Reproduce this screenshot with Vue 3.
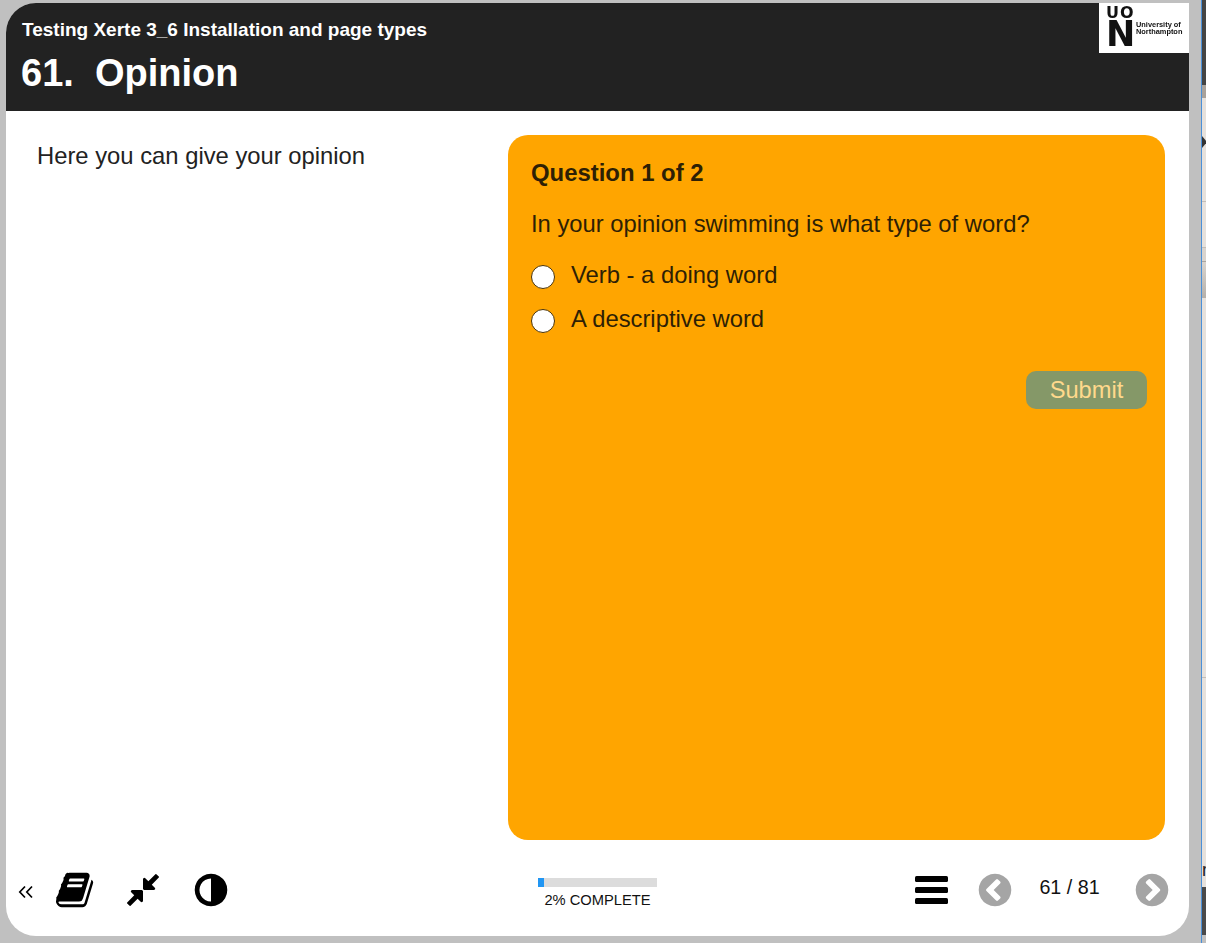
<script setup>
const options = ['Verb - a doing word', 'A descriptive word']
</script>

<template>
  <div class="screen">
    <div class="window">
      <header class="page-header">
        <div class="titles">
          <h2 class="course-title">Testing Xerte 3_6 Installation and page types</h2>
          <h1 class="page-title">61.&nbsp; Opinion</h1>
        </div>
        <div class="logo">
          <div class="logo-mark">
            <div class="logo-uo">UO</div>
            <div class="logo-n">N</div>
          </div>
          <div class="logo-name">University of<br />Northampton</div>
        </div>
      </header>

      <main class="content">
        <p class="intro">Here you can give your opinion</p>
        <section class="quiz">
          <h3 class="quiz-count">Question 1 of 2</h3>
          <p class="quiz-prompt">In your opinion swimming is what type of word?</p>
          <label v-for="opt in options" :key="opt" class="option">
            <span class="radio"></span>
            <span>{{ opt }}</span>
          </label>
          <div class="submit-row">
            <button class="submit">Submit</button>
          </div>
        </section>
      </main>

      <footer class="footer">
        <div class="tools">
          <svg class="chevrons" viewBox="0 0 16 16" width="16" height="16">
            <path d="M7 2.500 1.800 8 7 13.500M14 2.500 8.800 8l5.200 5.500" fill="none" stroke="#000" stroke-width="1.700" />
          </svg>
          <svg class="ico-book" viewBox="0 0 1792 1792" width="40" height="40">
            <path d="M1639 478q40 57 18 129l-275 906q-19 64-76.500 107.500t-122.500 43.500h-923q-77 0-148.500-53.500t-99.500-131.500q-24-67-2-127 0-4 3-27t4-37q1-8-3-21.500t-3-19.500q2-11 8-21t16.500-23.500 16.500-23.500q23-38 45-91.500t30-91.500q3-10 .5-30t-.5-28q3-11 17-28t17-23q21-36 42-92t25-90q1-9-2.500-32t.5-28q4-13 22-30.500t22-22.500q19-26 42.500-84.500t27.500-96.500q1-8-3-25.500t-2-26.500q2-8 9-18t18-23 17-21q8-12 16.500-30.500t15-35 16-36 19.500-32 26.500-23.500 36-11.500 47.500 5.500l-1 3q38-9 51-9h761q74 0 114 56t18 130l-274 906q-36 119-71.500 153.500t-128.500 34.500h-869q-27 0-38 15-11 16-1 43 24 70 144 70h923q29 0 56-15.500t35-41.500l300-987q7-22 5-57 38 15 59 43zm-1064 2q-4 13 2 22.500t20 9.500h608q13 0 25.500-9.500t16.500-22.500l21-64q4-13-2-22.500t-20-9.500h-608q-13 0-25.500 9.500t-16.500 22.500zm-83 256q-4 13 2 22.500t20 9.500h608q13 0 25.500-9.500t16.500-22.500l21-64q4-13-2-22.500t-20-9.500h-608q-13 0-25.500 9.500t-16.500 22.500z" />
          </svg>
          <svg class="ico-compress" viewBox="0 0 1792 1792" width="38" height="38">
            <path d="M896 960v448q0 26-19 45t-45 19-45-19l-144-144-332 332q-10 10-23 10t-23-10l-114-114q-10-10-10-23t10-23l332-332-144-144q-19-19-19-45t19-45 45-19h448q26 0 45 19t19 45zm755-672q0 13-10 23l-332 332 144 144q19 19 19 45t-19 45-45 19h-448q-26 0-45-19t-19-45v-448q0-26 19-45t45-19 45 19l144 144 332-332q10-10 23-10t23 10l114 114q10 10 10 23z" />
          </svg>
          <svg class="ico-contrast" viewBox="0 0 1792 1792" width="38" height="38">
            <path d="M896 1440v-1088q-148 0-273 73t-198 198-73 273 73 273 198 198 273 73zm768-544q0 209-103 385.500t-279.500 279.500-385.500 103-385.500-103-279.500-279.500-103-385.500 103-385.500 279.500-279.500 385.500-103 385.500 103 279.500 279.500 103 385.500z" />
          </svg>
        </div>

        <div class="progress">
          <div class="bar"><div class="bar-fill" :style="{ width: '5%' }"></div></div>
          <div class="bar-label">2% COMPLETE</div>
        </div>

        <div class="pager">
          <svg class="ico-menu" viewBox="0 0 32 28" width="33" height="28" preserveAspectRatio="none">
            <rect y="0" width="32" height="6" rx="1.500" />
            <rect y="11" width="32" height="6" rx="1.500" />
            <rect y="22" width="32" height="6" rx="1.500" />
          </svg>
          <svg class="ico-nav prev" viewBox="0 0 1792 1792" width="38" height="38">
            <path d="M1037 1395l102-102q19-19 19-45t-19-45l-307-307 307-307q19-19 19-45t-19-45l-102-102q-19-19-45-19t-45 19l-454 454q-19 19-19 45t19 45l454 454q19 19 45 19t45-19zm627-499q0 209-103 385.500t-279.500 279.500-385.500 103-385.500-103-279.500-279.500-103-385.500 103-385.500 279.500-279.500 385.500-103 385.500 103 279.500 279.500 103 385.500z" />
          </svg>
          <span class="page-count">61 / 81</span>
          <svg class="ico-nav" viewBox="0 0 1792 1792" width="38" height="38">
            <path d="M813 1395l454-454q19-19 19-45t-19-45l-454-454q-19-19-45-19t-45 19l-102 102q-19 19-19 45t19 45l307 307-307 307q-19 19-19 45t19 45l102 102q19 19 45 19t45-19zm851-499q0 209-103 385.500t-279.500 279.500-385.500 103-385.500-103-279.500-279.500-103-385.500 103-385.500 279.500-279.500 385.500-103 385.500 103 279.500 279.500 103 385.500z" />
          </svg>
        </div>
      </footer>
    </div>

    <aside class="behind">
      <div class="strip strip-dark"></div>
      <div class="strip strip-grey"></div>
      <div class="strip strip-tab"><span class="strip-arrow"></span></div>
      <div class="strip strip-row"></div>
      <div class="strip strip-thin"></div>
      <div class="strip strip-band"></div>
      <div class="strip strip-long"></div>
      <div class="strip strip-rest"><span class="strip-letter">r</span></div>
      <div class="strip strip-dark-end"></div>
    </aside>
  </div>
</template>

<style>
html,
body {
  margin: 0;
  background: #c0c0c0;
}
</style>

<style scoped>
.screen {
  display: flex;
  height: 943px;
  width: 1206px;
  overflow: hidden;
  padding: 3px 0 0 6px;
  box-sizing: border-box;
  background: #c0c0c0;
  font-family: "Liberation Sans", Arial, sans-serif;
}

.window {
  display: flex;
  flex-direction: column;
  flex: none;
  width: 1183px;
  height: 933px;
  background: #fff;
  border-radius: 30px 0 30px 30px;
  overflow: hidden;
}

.behind {
  display: flex;
  flex-direction: column;
  flex: none;
  width: 5px;
  height: 943px;
  margin: -3px 0 0 12px;
  border-left: 1px solid #4a90d9;
  box-sizing: border-box;
  overflow: hidden;
}

.strip {
  flex: none;
  box-sizing: border-box;
  background: #e6e1dc;
}

.strip-dark {
  height: 85px;
  background: #444;
}

.strip-grey {
  height: 13px;
  background: #a9a29b;
}

.strip-tab {
  height: 104px;
  display: flex;
  padding-top: 38px;
  border-bottom: 1px solid #c2bdb7;
}

.strip-arrow {
  width: 0;
  height: 0;
  border-left: 5px solid #333;
  border-top: 6px solid transparent;
  border-bottom: 6px solid transparent;
}

.strip-row {
  height: 46px;
  border-bottom: 1px solid #c2bdb7;
}

.strip-thin {
  height: 14px;
  background: #d9d4ce;
  border-bottom: 1px solid #aaa59f;
}

.strip-band {
  height: 36px;
  background: linear-gradient(#d9d4ce, #b5b0aa);
}

.strip-long {
  height: 380px;
  border-bottom: 1px solid #c2bdb7;
}

.strip-rest {
  height: 209px;
  overflow: hidden;
  display: flex;
  align-items: flex-end;
  padding-bottom: 8px;
}

.strip-letter {
  font-size: 18px;
  line-height: 18px;
  color: #222;
}

.strip-dark-end {
  height: 48px;
  background: #4a4a4a;
}

.page-header {
  display: flex;
  justify-content: space-between;
  align-items: flex-start;
  height: 108px;
  flex: none;
  background: #222;
  color: #fff;
}

.titles {
  padding: 15px 0 0 16px;
}

.course-title {
  margin: 0;
  font-size: 19px;
  line-height: 23px;
  font-weight: 700;
}

.page-title {
  margin: 10px 0 0 -1px;
  font-size: 38px;
  line-height: 44px;
  font-weight: 700;
}

.logo {
  display: flex;
  width: 90px;
  height: 50px;
  box-sizing: border-box;
  padding: 2px 0 0 7px;
  background: #fff;
  color: #111;
  filter: blur(0.3px);
}

.logo-mark {
  font-family: "DejaVu Sans", sans-serif;
  font-weight: 700;
  width: 30px;
}

.logo-uo {
  font-size: 16px;
  line-height: 16px;
  letter-spacing: 1px;
}

.logo-n {
  font-size: 35px;
  line-height: 27px;
}

.logo-name {
  margin-top: 16px;
  font-size: 7.400px;
  line-height: 7px;
  font-weight: 700;
  white-space: nowrap;
}

.content {
  display: grid;
  grid-template-columns: 502px 657px;
  flex: 1;
  min-height: 0;
  padding-top: 24px;
}

.intro {
  margin: 0;
  padding: 8px 0 0 31px;
  font-size: 23.800px;
  line-height: 26px;
  color: #222;
}

.quiz {
  height: 705px;
  background: #ffa500;
  border-radius: 20px;
  padding: 24px 18px 0 23px;
  box-sizing: border-box;
  color: #2e1f05;
  font-size: 23.800px;
}

.quiz-count {
  margin: 0;
  font-size: 23.900px;
  line-height: 28px;
  font-weight: 700;
}

.quiz-prompt {
  margin: 23px 0 0;
  line-height: 28px;
}

.option {
  display: flex;
  align-items: center;
  gap: 16px;
  height: 44px;
  line-height: 28px;
}

.option:first-of-type {
  margin-top: 15px;
}

.radio {
  width: 24px;
  height: 24px;
  flex: none;
  box-sizing: border-box;
  border: 1px solid #4a3205;
  border-radius: 50%;
  background: #fff;
  margin-top: 3px;
}

.submit-row {
  display: flex;
  justify-content: flex-end;
  margin-top: 30px;
}

.submit {
  width: 121px;
  height: 38px;
  border: 0;
  border-radius: 10px;
  background: #859868;
  color: #ffd98c;
  font-family: inherit;
  font-size: 23.700px;
  padding: 0;
}

.footer {
  display: grid;
  grid-template-columns: 1fr 119px 1fr;
  align-items: center;
  height: 96px;
  flex: none;
}

.tools {
  display: flex;
  align-items: center;
  padding-left: 12px;
  margin-top: 3px;
}

.chevrons {
  flex: none;
  margin-top: 5px;
}

.ico-book {
  margin-left: 21.500px;
}

.ico-compress {
  margin-left: 28.500px;
}

.ico-contrast {
  margin-left: 30px;
}

.progress {
  margin-top: 10px;
}

.bar {
  height: 9px;
  background: #dcdcdc;
}

.bar-fill {
  height: 100%;
  background: #2196f3;
}

.bar-label {
  margin-top: 5px;
  font-size: 14.700px;
  line-height: 17px;
  text-align: center;
  color: #111;
  white-space: nowrap;
}

.pager {
  display: flex;
  align-items: center;
  justify-content: flex-end;
  padding-right: 18px;
  margin-top: 3px;
}

.ico-nav {
  fill: #a5a5a5;
}

.ico-nav.prev {
  margin-left: 28px;
}

.page-count {
  width: 111px;
  padding-right: 8px;
  text-align: center;
  font-size: 19.700px;
  color: #111;
  margin-top: -5px;
}
</style>
